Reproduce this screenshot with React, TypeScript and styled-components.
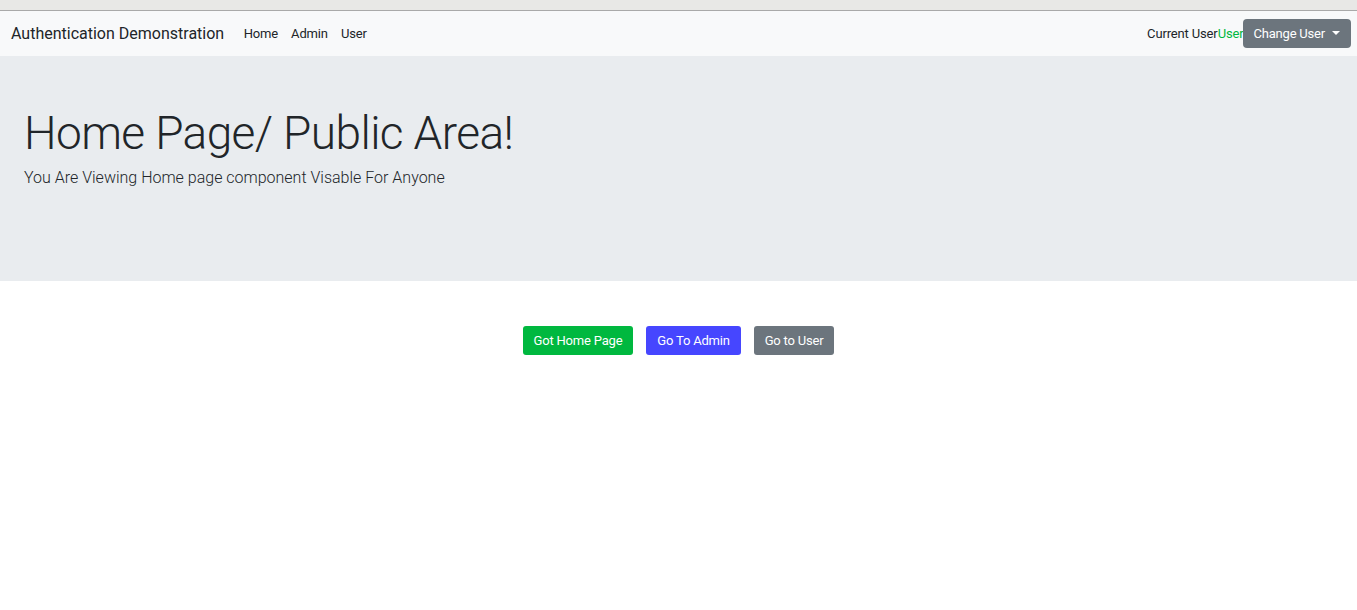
import React from "react";
import styled, { createGlobalStyle } from "styled-components";

const GlobalStyle = createGlobalStyle`
  html, body { margin: 0; padding: 0; background: #ffffff; }
  body { font-family: Roboto, "Liberation Sans", sans-serif; color: #212529; }
  * { box-sizing: border-box; }
`;

const TopStrip = styled.div`
  height: 11px;
  background: #e8e8e6;
  border-bottom: 1px solid #a9a9a9;
`;

const Navbar = styled.nav`
  height: 45px;
  background: #f8f9fa;
  display: flex;
  align-items: center;
  padding: 0 6px 0 11px;
`;

const Brand = styled.span`
  font-size: 16px;
  color: #212529;
  margin-right: 13px;
  white-space: nowrap;
`;

const NavLinks = styled.div`
  display: flex;
`;

const NavLink = styled.a`
  font-size: 13px;
  letter-spacing: -0.15px;
  color: #212529;
  text-decoration: none;
  padding: 0 6.5px;
`;

const Spacer = styled.div`
  flex: 1;
`;

const CurrentUser = styled.span`
  font-size: 13px;
  letter-spacing: -0.15px;
  color: #212529;
  white-space: nowrap;
`;

const UserName = styled.span`
  color: #00b83f;
`;

const DropdownButton = styled.button`
  font-family: Roboto, "Liberation Sans", sans-serif;
  font-size: 13px;
  letter-spacing: -0.2px;
  line-height: 19px;
  color: #ffffff;
  background: #6c757d;
  border: none;
  border-radius: 4px;
  padding: 5px 11px 5px 10px;
  height: 29px;
  display: flex;
  align-items: center;
  gap: 7px;
  margin-top: -1px;
`;

const Caret = styled.span`
  display: inline-block;
  width: 0;
  height: 0;
  border-left: 4px solid transparent;
  border-right: 4px solid transparent;
  border-top: 4px solid #ffffff;
`;

const Jumbotron = styled.header`
  height: 225px;
  background: #e9ecef;
  padding: 50px 24px 0 24px;
`;

const Title = styled.h1`
  margin: 0;
  font-size: 46px;
  letter-spacing: -0.6px;
  font-weight: 300;
  line-height: 55px;
  color: #212529;
`;

const Lead = styled.p`
  margin: 5px 0 0 0;
  font-size: 16px;
  font-weight: 300;
  line-height: 24px;
  color: #212529;
`;

const ButtonRow = styled.div`
  display: flex;
  justify-content: center;
  gap: 13px;
  padding-top: 45px;
`;

const ActionButton = styled.button<{ $bg: string }>`
  font-family: Roboto, "Liberation Sans", sans-serif;
  font-size: 13px;
  letter-spacing: -0.2px;
  line-height: 19px;
  height: 29px;
  padding: 5px 11px;
  color: #ffffff;
  background: ${(p) => p.$bg};
  border: none;
  border-radius: 3px;
`;

export default function App() {
  return (
    <>
      <GlobalStyle />
      <TopStrip />
      <Navbar>
        <Brand>Authentication Demonstration</Brand>
        <NavLinks>
          <NavLink href="#">Home</NavLink>
          <NavLink href="#">Admin</NavLink>
          <NavLink href="#">User</NavLink>
        </NavLinks>
        <Spacer />
        <CurrentUser>
          Current User<UserName>User</UserName>
        </CurrentUser>
        <DropdownButton>
          Change User <Caret />
        </DropdownButton>
      </Navbar>
      <Jumbotron>
        <Title>Home Page/ Public Area!</Title>
        <Lead>You Are Viewing Home page component Visable For Anyone</Lead>
      </Jumbotron>
      <ButtonRow>
        <ActionButton $bg="#00b83f">Got Home Page</ActionButton>
        <ActionButton $bg="#4646ff">Go To Admin</ActionButton>
        <ActionButton $bg="#6c757d">Go to User</ActionButton>
      </ButtonRow>
    </>
  );
}
